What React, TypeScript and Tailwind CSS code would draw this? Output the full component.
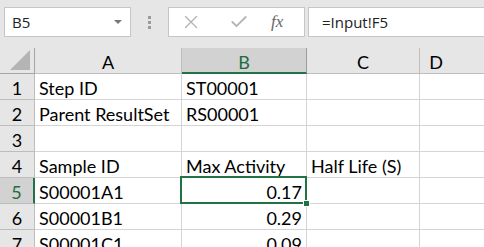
import { X, Check } from "lucide-react";

const rows: [string, string, string, boolean?][] = [
  ["Step ID", "ST00001", ""],
  ["Parent ResultSet", "RS00001", ""],
  ["", "", ""],
  ["Sample ID", "Max Activity", "Half Life (S)"],
  ["S00001A1", "0.17", "", true],
  ["S00001B1", "0.29", ""],
  ["S00001C1", "0.09", ""],
];

const cell = "border-r border-b border-[#d4d4d4] flex items-end pb-[1px] px-[4px] whitespace-nowrap";

export default function App() {
  return (
    <div className="w-[484px] h-[247px] overflow-hidden bg-white text-black" style={{ fontFamily: "Lato, 'Open Sans', sans-serif" }}>
      {/* formula bar */}
      <div className="h-[48px] bg-[#e6e6e6] flex pt-[7px]" style={{ fontFamily: "'Open Sans', 'Noto Sans', sans-serif" }}>
        <div className="ml-[4px] w-[127px] h-[30px] bg-white border border-[#c6c6c6] flex items-center pl-[7px] pr-[8px] text-[15px] leading-[20px] text-[#222]">
          <span className="flex-1">B5</span>
          <span className="w-0 h-0 border-l-[4px] border-r-[4px] border-t-[4px] border-l-transparent border-r-transparent border-t-[#777]" />
        </div>
        <div className="w-[37px] flex flex-col items-center justify-center gap-[2px] h-[30px]">
          <span className="w-[3px] h-[3px] bg-[#9a9a9a]" />
          <span className="w-[3px] h-[3px] bg-[#9a9a9a]" />
          <span className="w-[3px] h-[3px] bg-[#9a9a9a]" />
        </div>
        <div className="w-[137px] h-[30px] bg-white border border-[#c6c6c6] flex items-center">
          <X className="ml-[11px] w-[22px] h-[22px] text-[#b4b4b4]" strokeWidth={1.5} />
          <Check className="ml-[27px] w-[20px] h-[20px] text-[#b4b4b4]" strokeWidth={2.2} />
          <span className="ml-[22px] text-[17px] leading-[20px] italic text-[#666]" style={{ fontFamily: "'Liberation Serif', serif" }}>fx</span>
        </div>
        <div className="ml-[3px] flex-1 h-[30px] bg-white border border-[#c6c6c6] border-r-0 flex items-center pl-[13px] text-[15px] leading-[20px] text-[#222]">
          =Input!F5
        </div>
      </div>
      {/* sheet */}
      <div className="grid grid-cols-[35px_147px_125px_113px_1fr] auto-rows-[26px] text-[18px] leading-[20px]">
        <div className="bg-[#e6e6e6] border-r border-b border-[#a6a6a6] relative overflow-hidden">
          <span className="absolute right-[4px] bottom-[3px] w-0 h-0 border-b-[20px] border-l-[20px] border-b-[#b4b4b4] border-l-transparent" />
        </div>
        <div className="bg-[#e6e6e6] border-r border-b border-[#bdbdbd] flex items-end justify-center pb-[1px]">A</div>
        <div className="bg-[#d2d2d2] border-r border-[#9c9c9c] border-b-2 border-b-[#217346] flex items-end justify-center text-[#1f6b3f]">B</div>
        <div className="bg-[#e6e6e6] border-r border-b border-[#bdbdbd] flex items-end justify-center pb-[1px]">C</div>
        <div className="bg-[#e6e6e6] border-b border-[#bdbdbd] flex items-end justify-center pb-[1px] pr-[32px]">D</div>
        {rows.map(([a, b, c, sel], i) => (
          <Row key={i} n={i + 1} a={a} b={b} c={c} sel={!!sel} />
        ))}
      </div>
    </div>
  );
}

function Row({ n, a, b, c, sel }: { n: number; a: string; b: string; c: string; sel: boolean }) {
  const numeric = /^[0-9.]+$/.test(b);
  return (
    <>
      <div
        className={
          sel
            ? "bg-[#d2d2d2] border-b border-[#bdbdbd] border-r-2 border-r-[#217346] flex items-end justify-center pb-[1px] text-[#1f6b3f]"
            : "bg-[#e6e6e6] border-b border-r border-[#bdbdbd] flex items-end justify-center pb-[1px]"
        }
      >
        {n}
      </div>
      <div className={cell}>{a}</div>
      <div className={`${cell} relative ${numeric ? "justify-end" : ""} ${sel ? "z-10" : ""}`}>
        {b}
        {sel && (
          <>
            <span className="absolute left-[-2px] top-[-2px] right-[-1px] bottom-[-1px] border-2 border-[#217346]" />
            <span className="absolute right-[-4px] bottom-[-4px] w-[7px] h-[7px] bg-[#217346] border border-white" />
          </>
        )}
      </div>
      <div className={cell}>{c}</div>
      <div className={`${cell} border-r-0`} />
    </>
  );
}
